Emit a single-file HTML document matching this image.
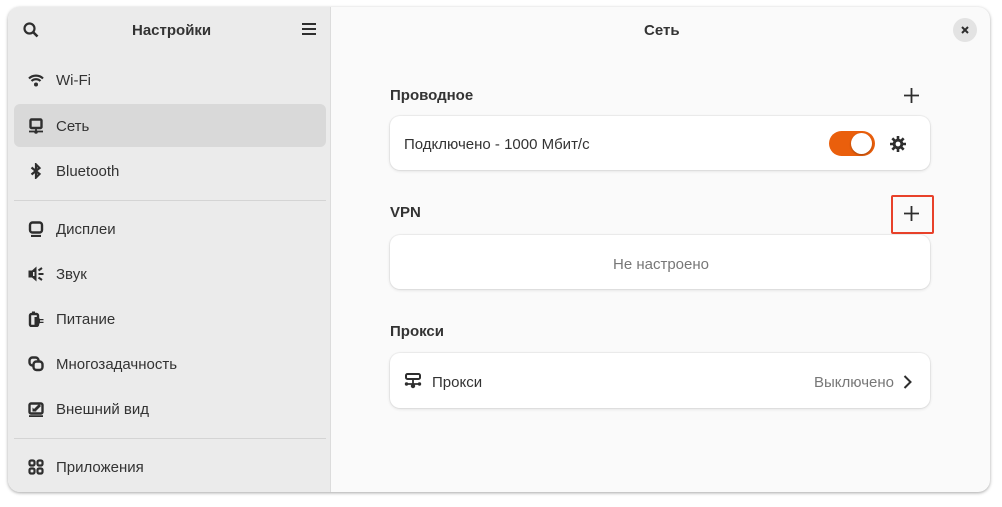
<!DOCTYPE html>
<html><head><meta charset="utf-8"><style>
*{box-sizing:border-box;margin:0;padding:0}
body{width:1002px;height:507px;background:#fff;font-family:"Liberation Sans","DejaVu Sans",sans-serif;position:relative;overflow:hidden;color:#2e2e2e}
.win{position:absolute;left:8px;top:7px;width:982px;height:485px;border-radius:12px;overflow:hidden;box-shadow:0 1px 3px rgba(0,0,0,.35);background:#fafafa}
.side{position:absolute;left:0;top:0;width:323px;height:485px;background:#ebebeb;border-right:1px solid #dcdcdc}
.t{position:absolute;font-size:15px}
.b{font-weight:bold}
.item{position:absolute;left:6px;width:312px;height:43px}
.item svg{position:absolute;left:14px;top:14px;width:16px;height:16px}
.item span{position:absolute;left:42px;top:14px;font-size:15px;color:#333}
.sel{background:#d9d9d9;border-radius:6px}
.sep{position:absolute;left:6px;width:312px;height:1px;background:#d4d4d4}
.card{position:absolute;left:382px;width:540px;background:#fff;border-radius:10px;box-shadow:0 0 0 1px rgba(0,0,0,.04),0 1px 3px rgba(0,0,0,.12)}
</style></head><body>
<div class="win">
<div class="side">
<svg style="position:absolute;left:15px;top:15px" width="16" height="16" viewBox="0 0 16 16"><circle cx="6.5" cy="6.5" r="5" fill="none" stroke="#2e2e2e" stroke-width="2.2"/><path d="M10 10l4.5 4.5" stroke="#2e2e2e" stroke-width="2.6"/></svg>
<div class="t b" style="left:124px;top:15px;color:#333">Настройки</div>
<svg style="position:absolute;left:294px;top:16px" width="14" height="12"><path d="M0 1h14M0 6h14M0 11h14" stroke="#2e2e2e" stroke-width="2"/></svg>
<div class="item" style="top:51px"><svg viewBox="0 0 16 16"><path d="M1 6.5a10 10 0 0 1 14 0M3.5 9a6.5 6.5 0 0 1 9 0" fill="none" stroke="#2e2e2e" stroke-width="2.2"/><circle cx="8" cy="12.5" r="2" fill="#2e2e2e"/></svg><span>Wi-Fi</span></div>
<div class="item sel" style="top:97px"><svg viewBox="0 0 16 16"><rect x="2.5" y="1.5" width="11" height="8.5" rx="1" fill="none" stroke="#2e2e2e" stroke-width="2.4"/><path d="M1 13.5h14M8 10v3" stroke="#2e2e2e" stroke-width="1.8"/><circle cx="8" cy="14" r="1.8" fill="#2e2e2e"/></svg><span>Сеть</span></div>
<div class="item" style="top:142px"><svg viewBox="0 0 16 16"><path d="M3.5 4.5l8 6.5-3.5 3.5V1.5L11.5 5l-8 6.5" fill="none" stroke="#2e2e2e" stroke-width="2.2"/></svg><span>Bluetooth</span></div>
<div class="sep" style="top:193px"></div>
<div class="item" style="top:200px"><svg viewBox="0 0 16 16"><rect x="2" y="1.5" width="12" height="10" rx="2.5" fill="none" stroke="#2e2e2e" stroke-width="2.4"/><path d="M3 15h10" stroke="#2e2e2e" stroke-width="2.2"/></svg><span>Дисплеи</span></div>
<div class="item" style="top:245px"><svg viewBox="0 0 16 16"><path d="M0.5 4.5h3.5l4.5-4v15L4 11.5H0.5z" fill="#2e2e2e"/><path d="M5 6h1.5v4H5z" fill="#ebebeb"/><path d="M10.5 4.5l3.5-2.5M10.5 8h5M10.5 11.5l3.5 2.5" stroke="#2e2e2e" stroke-width="2"/></svg><span>Звук</span></div>
<div class="item" style="top:290px"><svg viewBox="0 0 16 16"><rect x="4" y="0.5" width="3" height="3" fill="#2e2e2e"/><rect x="2" y="3" width="8" height="12" rx="1.5" fill="none" stroke="#2e2e2e" stroke-width="2.4"/><path d="M6.5 6h3.5l2 2h3.5v1.3h-3.5v1.4h3.5V12h-3.5l-2 2H6.5z" fill="#2e2e2e"/></svg><span>Питание</span></div>
<div class="item" style="top:335px"><svg viewBox="0 0 16 16"><rect x="1.5" y="1.5" width="9" height="8" rx="3" fill="none" stroke="#2e2e2e" stroke-width="2.4"/><rect x="5.5" y="5.5" width="9" height="8.5" rx="3" fill="#ebebeb" stroke="#2e2e2e" stroke-width="2.4"/></svg><span>Многозадачность</span></div>
<div class="item" style="top:380px"><svg viewBox="0 0 16 16"><rect x="1.5" y="2.5" width="13" height="10" rx="1.5" fill="none" stroke="#2e2e2e" stroke-width="2.4"/><path d="M1 15.2h14" stroke="#2e2e2e" stroke-width="2"/><path d="M5 9l6-6 2 2-5 5z" fill="#2e2e2e"/><path d="M4.5 6.5v4h4z" fill="#2e2e2e"/></svg><span>Внешний вид</span></div>
<div class="sep" style="top:431px"></div>
<div class="item" style="top:438px"><svg viewBox="0 0 16 16"><g fill="none" stroke="#2e2e2e" stroke-width="2.2"><rect x="1.5" y="1.5" width="5" height="5" rx="1.5"/><rect x="9.5" y="1.5" width="5" height="5" rx="1.5"/><rect x="1.5" y="9.5" width="5" height="5" rx="1.5"/><rect x="9.5" y="9.5" width="5" height="5" rx="1.5"/></g></svg><span>Приложения</span></div>
</div>
<div class="t b" style="left:636px;top:15px;color:#333">Сеть</div>
<div style="position:absolute;left:945px;top:11px;width:24px;height:24px;border-radius:50%;background:#e3e3e3"></div>
<svg style="position:absolute;left:953px;top:19px" width="8" height="8"><path d="M1 1l6 6M7 1l-6 6" stroke="#2e2e2e" stroke-width="2"/></svg>
<div class="t b" style="left:382px;top:80px;color:#333">Проводное</div>
<svg style="position:absolute;left:896px;top:81px" width="15" height="15"><path d="M7.5 0v15M0 7.5h15" stroke="#2e2e2e" stroke-width="1.8"/></svg>
<div class="card" style="top:109px;height:54px"></div>
<div class="t" style="left:396px;top:129px;color:#333">Подключено - 1000 Мбит/с</div>
<div style="position:absolute;left:821px;top:124px;width:46px;height:25px;border-radius:13px;background:#ea5f0c"></div>
<div style="position:absolute;left:843px;top:126px;width:21px;height:21px;border-radius:50%;background:#fff;box-shadow:0 1px 2px rgba(0,0,0,.3)"></div>
<svg style="position:absolute;left:882px;top:129px" width="16" height="16" viewBox="0 0 16 16"><g stroke="#2e2e2e" stroke-width="2.6"><path d="M8 0v16M0 8h16M2.3 2.3l11.4 11.4M13.7 2.3L2.3 13.7"/></g><circle cx="8" cy="8" r="5.3" fill="#2e2e2e"/><circle cx="8" cy="8" r="2.4" fill="#fff"/></svg>
<div class="t b" style="left:382px;top:197px;color:#333">VPN</div>
<div style="position:absolute;left:883px;top:188px;width:43px;height:39px;border:2px solid #e8412a;border-radius:2px"></div>
<svg style="position:absolute;left:896px;top:199px" width="15" height="15"><path d="M7.5 0v15M0 7.5h15" stroke="#2e2e2e" stroke-width="1.8"/></svg>
<div class="card" style="top:228px;height:54px"></div>
<div class="t" style="left:605px;top:249px;color:#777">Не настроено</div>
<div class="t b" style="left:382px;top:316px;color:#333">Прокси</div>
<div class="card" style="top:346px;height:55px"></div>
<svg style="position:absolute;left:396px;top:366px" width="18" height="16" viewBox="0 0 18 16"><rect x="2" y="1" width="14" height="5" rx="1.5" fill="none" stroke="#2e2e2e" stroke-width="2"/><path d="M9 6v7M1 11h16" stroke="#2e2e2e" stroke-width="1.8"/><circle cx="9" cy="13" r="2.2" fill="#2e2e2e"/><circle cx="2.5" cy="11" r="1.7" fill="#2e2e2e"/><circle cx="15.5" cy="11" r="1.7" fill="#2e2e2e"/></svg>
<div class="t" style="left:424px;top:367px;color:#333">Прокси</div>
<div class="t" style="left:806px;top:367px;color:#777">Выключено</div>
<svg style="position:absolute;left:895px;top:368px" width="9" height="14"><path d="M1.5 1l6 6-6 6" fill="none" stroke="#2e2e2e" stroke-width="2"/></svg>
</div>
</body></html>
